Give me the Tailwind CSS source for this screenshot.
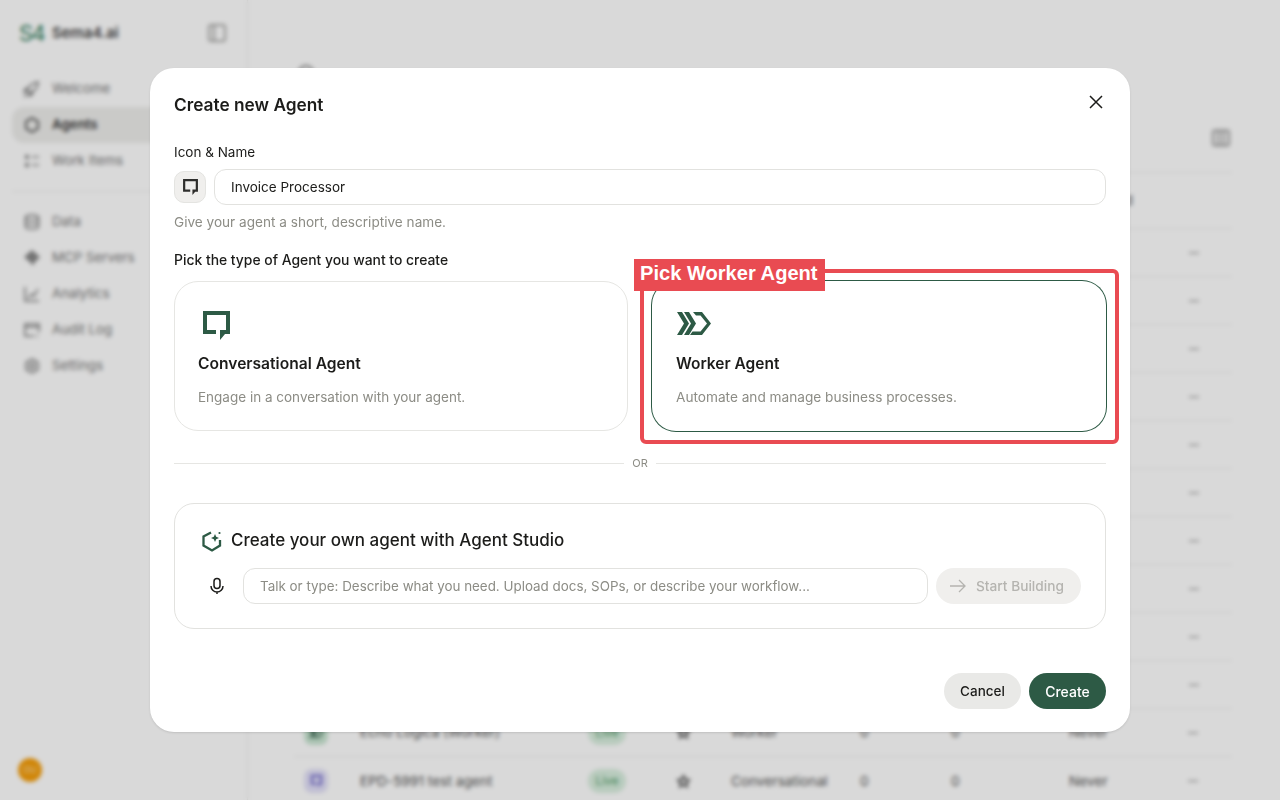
<!doctype html>
<html><head><meta charset="utf-8">
<script src="https://cdn.jsdelivr.net/npm/@tailwindcss/browser@4"></script>
</head>
<body class="font-['Inter','Noto_Sans',sans-serif]">
<div class="relative w-[1280px] h-[800px] overflow-hidden bg-white text-[#1c1c1a]">
  <!-- Page behind -->
  <div class="flex h-full">
    <aside class="w-[248px] shrink-0 border-r border-[#eeeeec] flex flex-col px-3 pb-[18px] h-full">
      <div class="flex items-center justify-between h-[66px] pl-[7px] pr-1 shrink-0">
        <div class="flex items-center gap-2">
          <span class="text-[22px] font-normal text-[#2d7a5a] tracking-[-1.500px] w-[25px]">S4</span>
          <span class="text-[14.800px] font-semibold text-[#444]">Sema4.ai</span>
        </div>
        <svg class="w-[18px] h-[18px] mr-[5px]" viewBox="0 0 18 18" fill="none" stroke="#a5a5a3" stroke-width="2"><rect x="1" y="1" width="16" height="16" rx="2"/><path d="M6 1v16"/></svg>
      </div>
      <nav class="flex flex-col text-[13.300px] text-[#777] mt-[4px] pt-[1px]">
        <a class="h-9 flex items-center gap-3 pl-[11px]"><svg class="w-[17px] h-[17px]" viewBox="0 0 17 17" fill="none" stroke="#777" stroke-width="1.500"><path d="M4 10l2-4c2-3 5-4 9-5 0 4-1 7-5 9l-4 2zM4 10l-3 1 1-3 3-1M7 12l-1 3 3-1 1-3M1 16l3-3"/></svg>Welcome</a>
        <a class="h-9 flex items-center gap-3 pl-3 rounded-xl bg-[#eeeeec] font-semibold text-[#333]"><svg class="w-4 h-4" viewBox="0 0 16 16" fill="none" stroke="#444" stroke-width="1.700"><path d="M8 1l6 3.500v7L8 15l-6-3.500v-7z"/></svg>Agents</a>
        <a class="h-9 flex items-center gap-3 pl-3"><svg class="w-4 h-4" viewBox="0 0 16 16" fill="#888" stroke="#888" stroke-width="1.500"><circle cx="3" cy="4" r="1.500"/><circle cx="3" cy="12" r="1.500"/><path d="M8 4h7M8 12h7"/></svg>Work Items</a>
      </nav>
      <div class="h-px bg-[#eeeeec] my-3"></div>
      <nav class="flex flex-col text-[13.300px] text-[#777]">
        <a class="h-9 flex items-center gap-3 pl-3"><svg class="w-4 h-4" viewBox="0 0 16 16" fill="none" stroke="#777" stroke-width="1.500"><ellipse cx="8" cy="3.500" rx="6.500" ry="2.500"/><path d="M1.500 3.500v9c0 1.400 3 2.500 6.500 2.500s6.500-1.100 6.500-2.500v-9M1.500 8c0 1.400 3 2.500 6.500 2.500s6.500-1.100 6.500-2.500"/></svg>Data</a>
        <a class="h-9 flex items-center gap-3 pl-3"><svg class="w-4 h-4" viewBox="0 0 16 16" fill="#888"><path d="M8 0l8 7-6 6-1 3-2-3-7-6z"/></svg>MCP Servers</a>
        <a class="h-9 flex items-center gap-3 pl-3"><svg class="w-4 h-4" viewBox="0 0 16 16" fill="none" stroke="#777" stroke-width="1.500"><path d="M1 1v14h14M4 12l4-4 2 2 4-7"/></svg>Analytics</a>
        <a class="h-9 flex items-center gap-3 pl-3"><svg class="w-4 h-4" viewBox="0 0 16 16" fill="none" stroke="#777" stroke-width="1.500"><path d="M10 14H1V2h14v8M1 5h14"/><path d="M13 12v1M13 14.500v1"/></svg>Audit Log</a>
        <a class="h-9 flex items-center gap-3 pl-3"><svg class="w-4 h-4" viewBox="0 0 16 16" fill="none" stroke="#777" stroke-width="1.500"><path d="M8 1l6 3.500v7L8 15l-6-3.500v-7z"/><circle cx="8" cy="8" r="2.500"/></svg>Settings</a>
      </nav>
      <div class="mt-auto ml-[6px] w-6 h-6 rounded-full bg-[#f59e0b] text-white/70 text-[9px] flex items-center justify-center">OU</div>
    </aside>
    <main class="flex-1 pl-[46px] pr-12 pt-[65px]">
      <div class="h-[60px] pl-[4px]"><span class="block w-4 h-4 rounded-full border-2 border-[#888]"></span></div>
      <div class="flex justify-end h-[47px]">
        <svg class="w-[18px] h-[18px] mt-1 mr-0.5" viewBox="0 0 18 18" fill="none" stroke="#999" stroke-width="2"><rect x="1" y="1.500" width="16" height="15" rx="2"/><path d="M6.500 2v14M11.500 2v14"/></svg>
      </div>
      <div class="h-[57px] border-y border-[#eeeeec] flex items-center justify-end pr-[99px] text-[13.700px] text-[#555]">Last Updated</div>
      <div class="flex flex-col text-[13.700px] text-[#555]">
        <div class="h-12 border-b border-[#eeeeec] flex items-center justify-end pr-[33px]"><span class="w-2.5 h-0.5 bg-[#bbb]"></span></div>
        <div class="h-12 border-b border-[#eeeeec] flex items-center justify-end pr-[33px]"><span class="w-2.5 h-0.5 bg-[#bbb]"></span></div>
        <div class="h-12 border-b border-[#eeeeec] flex items-center justify-end pr-[33px]"><span class="w-2.5 h-0.5 bg-[#bbb]"></span></div>
        <div class="h-12 border-b border-[#eeeeec] flex items-center justify-end pr-[33px]"><span class="w-2.5 h-0.5 bg-[#bbb]"></span></div>
        <div class="h-12 border-b border-[#eeeeec] flex items-center justify-end pr-[33px]"><span class="w-2.5 h-0.5 bg-[#bbb]"></span></div>
        <div class="h-12 border-b border-[#eeeeec] flex items-center justify-end pr-[33px]"><span class="w-2.5 h-0.5 bg-[#bbb]"></span></div>
        <div class="h-12 border-b border-[#eeeeec] flex items-center justify-end pr-[33px]"><span class="w-2.5 h-0.5 bg-[#bbb]"></span></div>
        <div class="h-12 border-b border-[#eeeeec] flex items-center justify-end pr-[33px]"><span class="w-2.5 h-0.5 bg-[#bbb]"></span></div>
        <div class="h-12 border-b border-[#eeeeec] flex items-center justify-end pr-[33px]"><span class="w-2.5 h-0.5 bg-[#bbb]"></span></div>
        <div class="h-12 border-b border-[#eeeeec] flex items-center justify-end pr-[33px]"><span class="w-2.5 h-0.5 bg-[#bbb]"></span></div>
        <div class="h-12 border-b border-[#eeeeec] flex items-center pl-[10px] pr-[33px]">
          <span class="w-6 h-6 rounded-lg bg-[#c9e6d2] flex items-center justify-center mr-[32px]"><svg class="w-[14px] h-[10px]" viewBox="0 0 34 23" fill="#2d5a45"><path d="M0 0h5l7 11.500-7 11.500H0l7-11.500zM7 0h5l7 11.500-7 11.500H7l7-11.500zM16 0h9l9 11.500-9 11.500H13l2.500-3.500h8l6.500-8-6.500-8H19z"/></svg></span>
          <span class="w-[228px] whitespace-nowrap">Echo Logica (Worker)</span>
          <span class="w-[38px] h-6 rounded-full bg-[#d9efdf] text-[#4d9a66] text-xs flex items-center justify-center mr-[50px]">Live</span>
          <svg class="w-[15px] h-[15px] mr-[40px]" viewBox="0 0 16 16" fill="none" stroke="#333" stroke-width="1.700"><path d="M8 2l1.800 4 4.200.400-3.200 2.800 1 4.300L8 11.300l-3.800 2.200 1-4.300L2 6.400 6.200 6z"/></svg>
          <span class="w-[129px]">Worker</span><span class="w-[91px]">0</span><span class="w-[118px]">0</span><span class="w-[119px]">Never</span><span class="w-2.5 h-0.5 bg-[#bbb]"></span>
        </div>
        <div class="h-12 flex items-center pl-[10px] pr-[33px]">
          <span class="w-6 h-6 rounded-lg bg-[#e2e0f8] flex items-center justify-center mr-[32px]"><svg class="w-[11px] h-[12px]" viewBox="0 0 27 29" fill="#5a50c0"><polygon points="0,0 27,0 27,23 22,23 17,29 17,19 23,19 23,4 4,4 4,19 13,19 13,23 0,23"/></svg></span>
          <span class="w-[228px] whitespace-nowrap">EPD-5991 test agent</span>
          <span class="w-[38px] h-6 rounded-full bg-[#d9efdf] text-[#4d9a66] text-xs flex items-center justify-center mr-[50px]">Live</span>
          <svg class="w-[15px] h-[15px] mr-[40px]" viewBox="0 0 16 16" fill="none" stroke="#333" stroke-width="1.700"><path d="M8 2l1.800 4 4.200.400-3.200 2.800 1 4.300L8 11.300l-3.800 2.200 1-4.300L2 6.400 6.200 6z"/></svg>
          <span class="w-[129px] whitespace-nowrap">Conversational</span><span class="w-[91px]">0</span><span class="w-[118px]">0</span><span class="w-[119px]">Never</span><span class="w-2.5 h-0.5 bg-[#bbb]"></span>
        </div>
      </div>
    </main>
  </div>

  <!-- Modal overlay -->
  <div class="absolute inset-0 bg-black/15 backdrop-blur-[2px] flex items-center justify-center">
    <div class="w-[980px] h-[664px] bg-white rounded-3xl shadow-sm flex flex-col px-6 pt-6 pb-[23px]">
      <div class="flex items-center justify-between h-[25px]">
        <h2 class="text-[17.300px] font-semibold leading-[25px]">Create new Agent</h2>
        <svg class="w-5 h-5 -mt-1.5" viewBox="0 0 20 20" fill="none" stroke="#1c1c1a" stroke-width="1.500"><path d="M4 4l12 12M16 4L4 16"/></svg>
      </div>
      <label class="text-[13.500px] leading-5 mt-[25px] text-[#1c1c1a]">Icon &amp; Name</label>
      <div class="flex items-center gap-2 mt-[7px]">
        <span class="w-8 h-8 rounded-[10px] bg-[#f0efed] border border-[#e4e4e1] flex items-center justify-center">
          <svg class="w-[15px] h-[16px]" viewBox="0 0 27 29" fill="#2e2e2c"><polygon points="0,0 27,0 27,23 22,23 17,29 17,19 23,19 23,4 4,4 4,19 13,19 13,23 0,23"/></svg>
        </span>
        <div class="flex-1 h-9 rounded-xl border border-[#e2e2df] flex items-center pl-4 text-[13.500px]">Invoice Processor</div>
      </div>
      <p class="text-[13.600px] leading-5 mt-[7px] text-[#8c8c85]">Give your agent a short, descriptive name.</p>
      <p class="text-[13.900px] leading-5 mt-[18px] font-medium">Pick the type of Agent you want to create</p>
      <div class="grid grid-cols-2 gap-6 mt-[11px]">
        <div class="h-[150px] rounded-3xl border border-[#e6e6e3] pl-[23px] pt-[29px]">
          <svg class="w-[27px] h-[29px] ml-[5px]" viewBox="0 0 27 29" fill="#2d5a45"><polygon points="0,0 27,0 27,23 22,23 17,29 17,19 23,19 23,4 4,4 4,19 13,19 13,23 0,23"/></svg>
          <p class="text-[15.600px] font-semibold leading-6 mt-[12px]">Conversational Agent</p>
          <p class="text-[13.500px] leading-5 mt-[11px] text-[#8c8c85]">Engage in a conversation with your agent.</p>
        </div>
        <div class="h-[150px] rounded-3xl ring-1 ring-[#2d5a45] pl-6 pt-[31px]">
          <svg class="w-[34px] h-[23px] ml-px" viewBox="0 0 34 23" fill="#2d5a45"><path d="M0 0h5l7 11.500-7 11.500H0l7-11.500zM7 0h5l7 11.500-7 11.500H7l7-11.500zM16 0h9l9 11.500-9 11.500H13l2.500-3.500h8l6.500-8-6.500-8H19z"/></svg>
          <p class="text-[15.500px] font-semibold leading-6 mt-[17px]">Worker Agent</p>
          <p class="text-[13.650px] leading-5 mt-[11px] text-[#8c8c85]">Automate and manage business processes.</p>
        </div>
      </div>
      <div class="flex items-center gap-2 mt-[22px] h-5 text-[11px] text-[#8c8c85]">
        <div class="flex-1 h-px bg-[#e6e6e3]"></div><span>OR</span><div class="flex-1 h-px bg-[#e6e6e3]"></div>
      </div>
      <div class="mt-[30px] h-[126px] rounded-[20px] border border-[#e2e2df] px-6 pt-[23px]">
        <div class="flex items-center gap-2 h-7">
          <svg class="w-[22px] h-[22px] ml-[2px]" viewBox="0 0 22 22" fill="none" stroke="#2d5a45" stroke-width="2.300"><path d="M10 2.500L2.500 6.500v9l8.500 5 8-5V10"/><path d="M14 4l1.200 2.800L18 8l-2.800 1.200L14 12l-1.200-2.800L10 8l2.800-1.200z" fill="#2d5a45" stroke="none"/><circle cx="18.500" cy="3" r="1.100" fill="#2d5a45" stroke="none"/></svg>
          <span class="text-[17px] font-medium">Create your own agent with Agent Studio</span>
        </div>
        <div class="flex items-center mt-[13px]">
          <svg class="w-[18px] h-[18px] ml-[9px] mr-[17px]" viewBox="0 0 18 18" fill="none" stroke="#1c1c1a" stroke-width="1.500"><rect x="6" y="1.500" width="6" height="10" rx="3"/><path d="M3 9a6 6 0 0012 0M9 15v2"/></svg>
          <div class="flex-1 h-9 rounded-xl border border-[#e2e2df] flex items-center pl-4 text-[13.400px] text-[#8c8c85]">Talk or type: Describe what you need. Upload docs, SOPs, or describe your workflow...</div>
          <div class="ml-2 w-[145px] h-9 rounded-full bg-[#f0efed] flex items-center pl-[13px] gap-[9px] text-[13.700px] font-medium text-[#b5b4b0] whitespace-nowrap">
            <svg class="w-[18px] h-[18px]" viewBox="0 0 18 18" fill="none" stroke="#b5b4b0" stroke-width="1.300"><path d="M1 9h15M10 3l6 6-6 6"/></svg>Start Building
          </div>
        </div>
      </div>
      <div class="mt-auto flex justify-end gap-2">
        <button class="w-[77px] h-9 rounded-full bg-[#e9e9e7] text-[13.500px] font-medium">Cancel</button>
        <button class="w-[77px] h-9 rounded-full bg-[#2d5a45] text-white text-[14px] font-medium">Create</button>
      </div>
    </div>
  </div>

  <!-- Annotation -->
  <div class="absolute left-[640px] top-[269px] w-[479px] h-[175px] border-4 border-[#e94b52] rounded-[6px]"></div>
  <div class="absolute left-[634px] top-[259px] w-[191px] h-8 bg-[#e94b52] text-white font-['Liberation_Sans',sans-serif] font-bold text-[20.100px] leading-[28px] pl-[6px] whitespace-nowrap">Pick Worker Agent</div>
</div>
</body></html>
